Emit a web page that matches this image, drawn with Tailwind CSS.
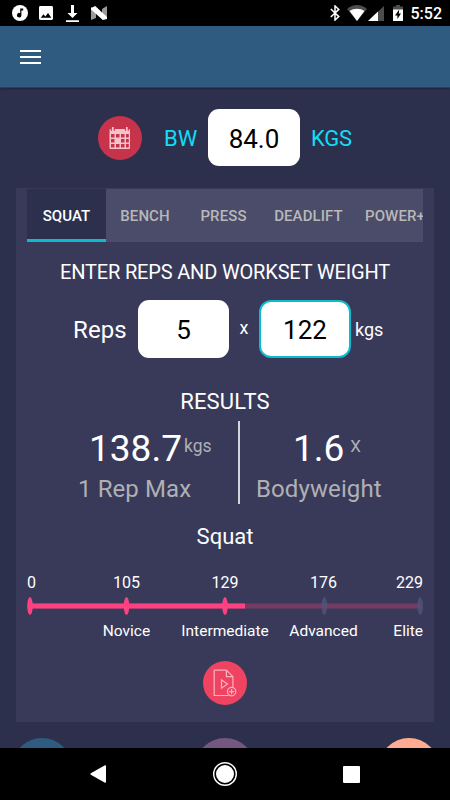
<!DOCTYPE html>
<html lang="en">
<head>
    <meta charset="UTF-8">
    <meta name="viewport" content="width=device-width, initial-scale=1.0">
    <title>Strength Levels</title>
    <script src="https://cdn.jsdelivr.net/npm/@tailwindcss/browser@4"></script>
</head>
<body class="bg-black">
<div class="flex flex-col w-[450px] h-[800px] overflow-hidden bg-[#2d304d] text-white font-['Roboto',sans-serif]">

    <!-- Status bar -->
    <div class="flex items-center justify-between h-[26px] shrink-0 bg-black pl-3 pr-[8px]">
        <div class="flex items-center">
            <svg class="w-4 h-4" viewBox="0 0 16 16">
                <circle cx="8" cy="8" r="8" fill="#fff"/>
                <path d="M8.2 3.6h3v2H9.4v4.6a2.2 2.2 0 1 1-1.2-2z" fill="#000"/>
            </svg>
            <svg class="w-[14px] h-[14px] ml-[11px]" viewBox="0 0 14 14">
                <rect width="14" height="14" rx="1.4" fill="#fff"/>
                <path d="M1.8 11.8l2.6-3.6 2 2.3L9 7l3.4 4.8z" fill="#000"/>
            </svg>
            <svg class="w-[13px] h-[17px] ml-[13px]" viewBox="0 0 13 17" fill="#fff">
                <path d="M5 0h3v8h3.5l-5 5-5-5H5zM0 15.2h13V17H0z"/>
            </svg>
            <svg class="w-4 h-[14px] ml-3" viewBox="0 0 16 14">
                <path d="M0 1l5 3v8l-5 2zM16 0v13l-5-3V3z" fill="#9a9a9a"/>
                <path d="M0 2L4.2 0 16 11v2l-4.2 1L0 3.5z" fill="#fff"/>
            </svg>
        </div>
        <div class="flex items-center">
            <svg class="w-[10px] h-4" viewBox="0 0 10 16" fill="none" stroke="#fff" stroke-width="1.5">
                <path d="M.8 4l8 7.6L5 15V1l3.8 3.4-8 7.6"/>
            </svg>
            <svg class="w-[20px] h-[16px] ml-[7px]" viewBox="0 0 20 16">
                <path d="M0 4C6-1.3 14-1.3 20 4L10 16z" fill="#4d4d4d"/>
                <path d="M2.6 6C7 3 13 3 17.4 6L10 16z" fill="#fff"/>
            </svg>
            <svg class="w-4 h-[15px] ml-px" viewBox="0 0 16 15">
                <path d="M16 0v15H0z" fill="#4d4d4d"/>
                <path d="M10 5.6V15H0z" fill="#fff"/>
            </svg>
            <svg class="w-[10px] h-4 ml-[9px]" viewBox="0 0 10 16">
                <path d="M0 1.5h3V0h4v1.5h3V5H0z" fill="#4d4d4d"/>
                <path d="M0 4.5h10V16H0z" fill="#fff"/>
                <path d="M6.2 4.5L2 10.4h2.4V14L8 8.5H5.8z" fill="#000"/>
            </svg>
            <span class="ml-[8px] text-[16px] leading-none font-medium pt-[2px]">5:52</span>
        </div>
    </div>

    <!-- App bar -->
    <div class="flex items-center h-[62px] shrink-0 bg-[#2f5b80] border-b border-[#28415f] pl-5 shadow-[0_1px_2px_rgba(0,0,0,0.3)]">
        <div class="flex flex-col gap-[4px] w-[21px]">
            <span class="h-[2px] bg-white"></span>
            <span class="h-[2px] bg-white"></span>
            <span class="h-[2px] bg-white"></span>
        </div>
    </div>

    <!-- Content -->
    <div class="flex-1 min-h-0 overflow-hidden">
        <!-- Bodyweight -->
        <div class="flex items-center mt-[21px] h-[57px] pl-[98px] text-[22px] leading-none text-[#12dcf5]">
            <div class="flex items-center justify-center w-[44px] h-[44px] rounded-full bg-[#c6334b]">
                <svg class="w-[22px] h-[22px]" viewBox="0 0 22 22">
                    <path fill="#f5c3cc" fill-rule="evenodd" d="M1.5 2H20a1 1 0 0 1 1 1v18a1 1 0 0 1-1 1H1.5a1 1 0 0 1-1-1V3a1 1 0 0 1 1-1zM2 7v3.4h3.5V7zM7 7v3.4h3.5V7zM12 7v3.4h3.5V7zM17 7v3.4h2.8V7zM2 12v3.4h3.5V12zM12 12v3.4h3.5V12zM17 12v3.4h2.8V12zM2 17v3.4h3.5V17zM7 17v3.4h3.5V17zM12 17v3.4h3.5V17zM17 17v3.4h2.8V17z"/>
                    <path d="M3.8.8v3M17.8.8v3" stroke="#c6334b" stroke-width="4"/>
                    <path d="M3.8.3v3.6M17.8.3v3.6" stroke="#f5c3cc" stroke-width="1.8" stroke-linecap="round"/>
                </svg>
            </div>
            <span class="w-[34px] ml-[22px] pt-[3px]">BW</span>
            <div class="flex items-center justify-center w-[92px] h-[57px] ml-[10px] pt-[2px] rounded-[11px] bg-white text-black text-[26px]">84.0</div>
            <span class="ml-[11px] pt-[3px] tracking-[-0.2px]">KGS</span>
        </div>

        <!-- Calculator card -->
        <div class="w-[418px] h-[534px] mt-[22px] mx-auto pt-px px-[11px] bg-[#393a5a]">
            <!-- Tabs -->
            <div class="flex h-[53px] overflow-hidden bg-[#4a4c6a] text-[15px] font-medium tracking-[0.1px] text-[#b8b8b8] whitespace-nowrap">
                <div class="flex items-center justify-center shrink-0 min-w-[79px] px-[11px] pt-[4px] bg-[#2d304d] text-white border-b-[3px] border-[#0cbccd]">SQUAT</div>
                <div class="flex items-center justify-center shrink-0 w-[78px] pt-[2px]">BENCH</div>
                <div class="flex items-center justify-center shrink-0 w-[79px] pt-[2px]">PRESS</div>
                <div class="flex items-center justify-center shrink-0 w-[91px] pt-[2px]">DEADLIFT</div>
                <div class="flex items-center shrink-0 pl-[11px] pt-[2px]">POWER+</div>
            </div>

            <div class="flex items-center justify-center h-[58px] pt-[2px] text-[20px] leading-none tracking-[-0.17px] whitespace-nowrap">ENTER REPS AND WORKSET WEIGHT</div>

            <!-- Inputs -->
            <div class="flex items-center h-[58px] pl-[46px] leading-none">
                <span class="w-[65px] pt-[2px] text-[24px] tracking-[0.1px]">Reps</span>
                <div class="flex items-center justify-center w-[91px] h-[58px] pt-[2px] rounded-[11px] bg-white text-black text-[26px]">5</div>
                <span class="w-[30px] text-center text-[18px] pb-[2px]">x</span>
                <div class="flex items-center justify-center w-[92px] h-[58px] pt-[2px] rounded-[12px] border-2 border-[#0cbccd] bg-white text-black text-[26px]">122</div>
                <span class="ml-[4px] pt-[2px] text-[18px]">kgs</span>
            </div>

            <!-- Results -->
            <div class="flex items-center justify-center h-[39px] mt-[24px] pt-px text-[22px] leading-none tracking-[0.2px]">RESULTS</div>
            <div class="flex h-[83px] leading-none">
                <div class="w-[213px] border-r-2 border-[#d4d4dc]">
                    <div class="flex pl-[62px] pt-[9px]">
                        <span class="h-[38px] text-[37px]">138.7</span>
                        <span class="mt-[8px] ml-[2px] text-[17.5px] text-[#b0b0b4]">kgs</span>
                    </div>
                    <div class="pl-[51px] mt-[9px] text-[24px] tracking-[0.1px] text-[#b0b0b4]">1 Rep Max</div>
                </div>
                <div class="flex-1">
                    <div class="flex pl-[53px] pt-[9px]">
                        <span class="h-[38px] text-[37px]">1.6</span>
                        <span class="mt-[8px] ml-[6px] text-[17px] text-[#b0b0b4]">X</span>
                    </div>
                    <div class="pl-[16px] mt-[9px] text-[24px] tracking-[0.1px] text-[#b0b0b4] whitespace-nowrap">Bodyweight</div>
                </div>
            </div>

            <div class="flex items-center justify-center h-[64px] pt-px text-[22px] leading-none">Squat</div>

            <!-- Strength scale -->
            <div class="grid grid-cols-[50px_99px_98px_99px_50px] h-[24px] items-center text-center text-[16px] leading-none pt-[5px]">
                <span class="text-left">0</span>
                <span>105</span>
                <span>129</span>
                <span>176</span>
                <span class="text-right">229</span>
            </div>
            <svg class="block w-[396px] h-[28px]" viewBox="0 0 396 28">
                <rect x="3" y="11.5" width="390" height="5" fill="#743c65"/>
                <rect x="3" y="11.5" width="215" height="5" fill="#ff4081"/>
                <g fill="#ff4081">
                    <ellipse cx="3" cy="14" rx="2.8" ry="9"/>
                    <ellipse cx="99.5" cy="14" rx="2.8" ry="9"/>
                    <ellipse cx="198" cy="14" rx="2.8" ry="9"/>
                </g>
                <g fill="#54527a" fill-opacity=".8">
                    <ellipse cx="297.3" cy="14" rx="2.8" ry="9"/>
                    <ellipse cx="393.2" cy="14" rx="2.8" ry="9"/>
                </g>
            </svg>
            <div class="grid grid-cols-[50px_99px_98px_99px_50px] h-[24px] items-center text-center text-[15.5px] leading-none whitespace-nowrap">
                <span></span>
                <span>Novice</span>
                <span>Intermediate</span>
                <span>Advanced</span>
                <span class="text-right">Elite</span>
            </div>

            <div class="flex items-center justify-center w-[44px] h-[44px] mt-[17px] mx-auto rounded-full bg-[#ee4462]">
                <svg class="w-[24px] h-[28px]" viewBox="0 0 24 28" fill="none" stroke="#ffb0bd" stroke-width="1.2">
                    <path d="M15.5 26.5H1.2V1.2h12.2l6.5 6.5v10M13.4 1.2v6.5h6.5M8.5 11v8.2l6-4.1z"/>
                    <circle cx="18.6" cy="22.6" r="4.2"/>
                    <path d="M18.6 20v5.2M16 22.6h5.2"/>
                </svg>
            </div>
        </div>

        <!-- Bottom round buttons, cut by the nav bar -->
        <div class="flex justify-between mt-[16px] px-[11.5px]">
            <div class="w-[60px] h-[60px] rounded-full bg-[#2f5b80]"></div>
            <div class="w-[60px] h-[60px] rounded-full bg-[#74587f]"></div>
            <div class="w-[60px] h-[60px] rounded-full bg-[#ffab91]"></div>
        </div>
    </div>

    <!-- Navigation bar -->
    <div class="flex items-center justify-between h-[52px] shrink-0 bg-black pl-[90px] pr-[90px]">
        <svg class="w-4 h-[18px]" viewBox="0 0 16 18" fill="#fff">
            <path d="M15 .2Q16 0 16 1v16q0 1-1 .8L.8 9.7q-.8-.7 0-1.4z"/>
        </svg>
        <svg class="w-[24px] h-[24px]" viewBox="0 0 24 24">
            <circle cx="12" cy="12" r="11.3" fill="none" stroke="#fff" stroke-width="1.4"/>
            <circle cx="12" cy="12" r="9" fill="#fff"/>
        </svg>
        <div class="w-[17px] h-[17px] rounded-[1px] bg-white"></div>
    </div>
</div>
</body>
</html>
